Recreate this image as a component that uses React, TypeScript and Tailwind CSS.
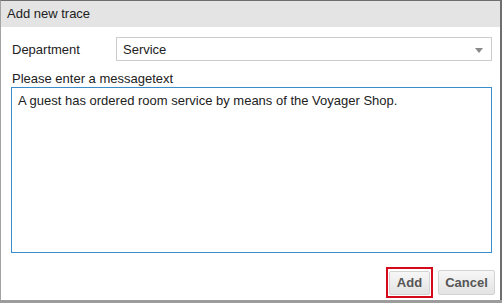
const font = { fontFamily: '"Liberation Sans", Arial, sans-serif' };

export default function App() {
	return (
		<div className="w-[502px] h-[303px] flex flex-col bg-[#9c9c9c]" style={font}>
			<div className="h-[300px] flex flex-col border-l border-l-[#a3a3a3] border-t border-t-[#6e6e6e] border-r-2 border-r-[#6e6e6e] bg-white">
				<div className="h-[26px] shrink-0 bg-[#e4e4e4] pl-[6px] flex items-center text-[13px] text-[#222]">
					Add new trace
				</div>
				<div className="flex-1 flex flex-col pl-[10px] pr-[8px] pt-[10px]">
					<div className="flex items-center h-[24px] text-[13px] text-[#222]">
						<span className="w-[105px] pl-[1px] pt-[1px]">Department</span>
						<div className="relative flex-1 h-[24px] border border-[#cccccc] flex items-center pl-[6px] pt-[1px]">
							Service
							<span className="absolute right-[8px] top-[10px] w-0 h-0 border-x-4 border-x-transparent border-t-[5px] border-t-[#8a8a8a]" />
						</div>
					</div>
					<div className="mt-[10px] text-[13px] leading-[15px] text-[#222] pl-[1px]">
						Please enter a messagetext
					</div>
					<div className="mt-[1px] h-[166px] border border-[#3a8ccb] px-[6px] pt-[5px] text-[13px] leading-[15px] text-[#222]">
						A guest has ordered room service by means of the Voyager Shop.
					</div>
					<div className="flex justify-end items-center gap-[5px] mt-[14px] mr-[-3px]">
						<div className="border-2 border-[#d40a1c] p-[1px]">
							<button className="h-[24px] w-[41px] rounded-[2px] border border-[#d3d3d3] bg-gradient-to-b from-[#f7f7f7] to-[#e3e3e3] text-[13px] font-bold text-[#555]">
								Add
							</button>
						</div>
						<button className="h-[25px] w-[57px] rounded-[2px] border border-[#d3d3d3] bg-gradient-to-b from-[#f7f7f7] to-[#e3e3e3] text-[13px] font-bold text-[#555]">
							Cancel
						</button>
					</div>
				</div>
			</div>
		</div>
	);
}
